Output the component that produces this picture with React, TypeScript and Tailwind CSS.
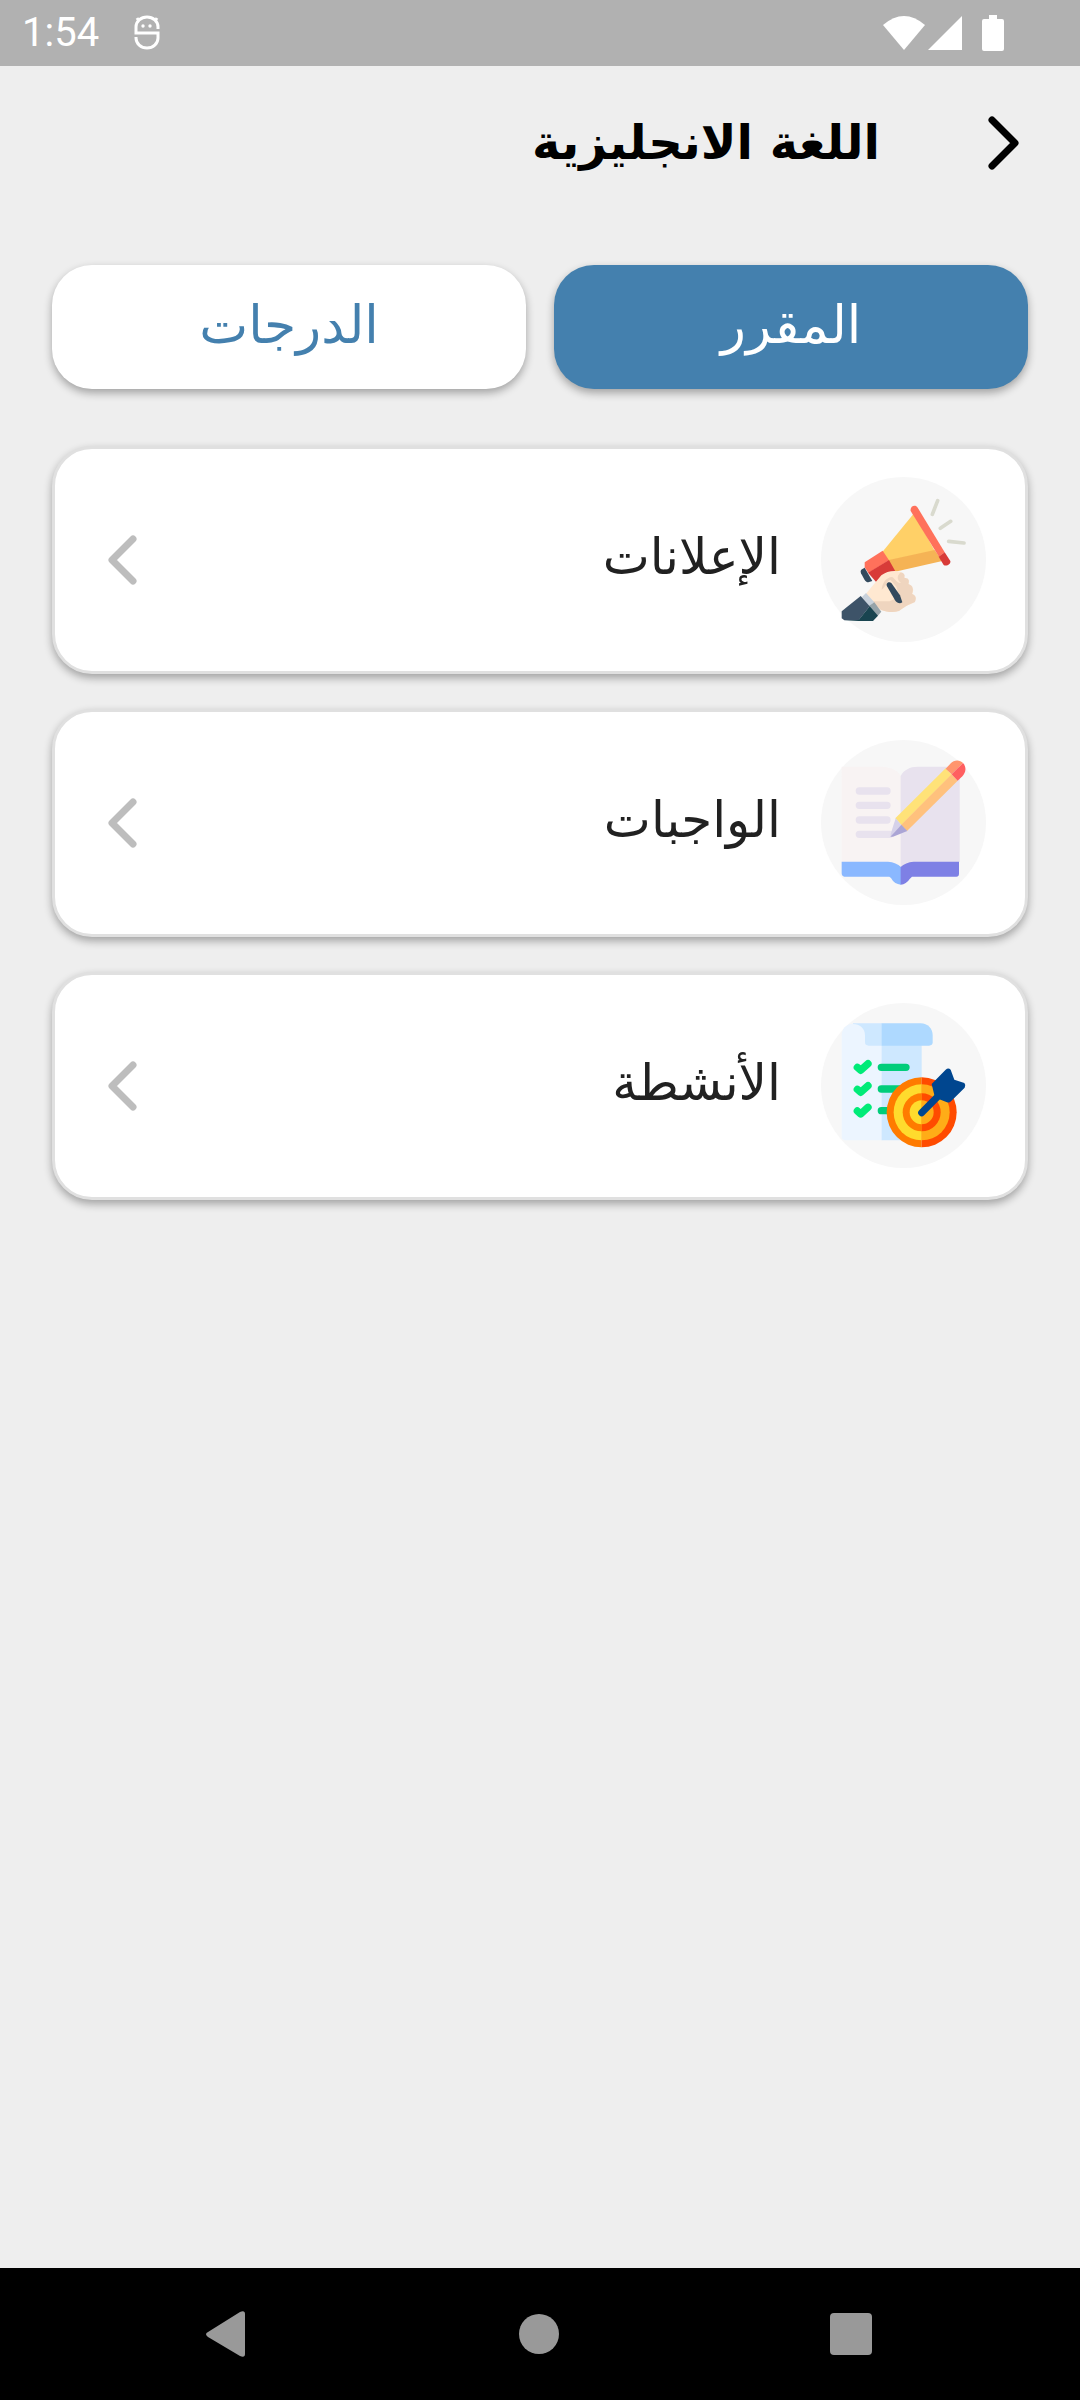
import { useState, type ReactNode } from "react";

function MegaphoneIcon() {
  return (
    <svg viewBox="64 111 495 495" className="size-[165px] shrink-0" aria-hidden="true">
      <circle cx="311.500" cy="358.500" r="247.500" fill="#f7f7f7" />
      <path d="M343 220L248 336L266 362L405 332Z" fill="#ffd067" />
      <path d="M264 361L405 330L428 363L286 395Z" fill="#f5b355" />
      <path d="M333 213C330 199 347 192 354 203L435 337L418 350Z" fill="#ff715b" />
      <path d="M435 337L452 363C455 371 440 381 432 375L417 350Z" fill="#d83b38" />
      <path d="M249 332L268 361L206 399L195 382V367Z" fill="#ff715b" />
      <path d="M268 360L287 394L230 427L205 398Z" fill="#d83b38" />
      <path d="M195 383L218 423L206 427C202 427 198 424 195 420L184 400C181 393 184 390 187 388Z" fill="#334a5e" />
      <path d="M199 461L245 406C262 392 286 390 304 396L316 414L327 420V431L341 449L338 462L348 470C350 486 338 490 324 496L300 511C285 519 265 516 244 510Z" fill="#ffe8d1" />
      <path d="M212 484H270L300 470L290 440L273 420C261 420 262 438 246 449C248 428 260 412 277 411C286 415 292 431 304 429C294 422 291 411 298 403C302 394 312 396 315 406L314 414C327 412 330 422 326 432C341 436 342 449 337 462C349 464 351 478 345 487C326 493 309 505 298 513C281 519 260 516 244 510L218 487Z" fill="#efd5bf" />
      <path d="M262 439C257 429 268 423 275 429L301 466L308 487C300 493 292 488 287 482Z" fill="#334a5e" />
      <path d="M199 459L224 487L208 498L187 471Z" fill="#c8d1db" />
      <path d="M224 487L245 515L234 528L206 499Z" fill="#96a3a9" />
      <path d="M183 468L210 499L177 541H134L126 535V514Z" fill="#3d5368" />
      <path d="M210 499L235 527L220 543H134L177 540Z" fill="#194450" />
      <path d="M414 182L398 223M453 244L422 265M447 304L493 309" fill="none" stroke="#d9dace" strokeWidth="11" strokeLinecap="round" />
    </svg>
  );
}

function NotebookIcon() {
  return (
    <svg viewBox="64 121 495 495" className="size-[165px] shrink-0" aria-hidden="true">
      <circle cx="311.500" cy="368.500" r="247.500" fill="#f7f7f7" />
      <path d="M126 201H246C275 202 297 214 304 230V503L266 487H126Z" fill="#f8f3f3" />
      <path d="M303 229C312 211 331 201 354 201H470Q480 201 480 211V487H342L303 503Z" fill="#e8e2ee" />
      <path d="M179 274H262M179 317H262M179 361H262M179 404H270" stroke="#e8e2ee" strokeWidth="22" strokeLinecap="round" />
      <path d="M126 486H265Q290 488 304 502V555Q284 554 274 535L269 531H134Q126 530 126 521Z" fill="#8ab8ff" />
      <path d="M303 502Q317 488 342 486H478V522Q478 531 470 531H337L330 538Q320 554 303 555Z" fill="#7e80e5" />
      <path d="M438 206L456 225L305 376L287 356Z" fill="#ffe278" />
      <path d="M456 224L474 243L322 394L304 376Z" fill="#ffc17d" />
      <path d="M438 207L452 192C464 179 481 180 490 190L456 224Z" fill="#ff956d" />
      <path d="M490 190C501 202 499 218 488 230L474 243L456 224Z" fill="#ff5f60" />
      <path d="M288 356L305 376L273 410V403Z" fill="#d5d1e9" />
      <path d="M305 375L323 394L280 411H272Z" fill="#aba5d5" />
    </svg>
  );
}

function ChecklistTargetIcon() {
  return (
    <svg viewBox="64 131 495 495" className="size-[165px] shrink-0" aria-hidden="true">
      <circle cx="311.500" cy="378.500" r="247.500" fill="#f7f7f7" />
      <path d="M160 193H248V543H135Q126 541 126 533V228C126 209 139 194 160 193Z" fill="#ecf5ff" />
      <path d="M246 250H366V543H246Z" fill="#cee8ff" />
      <path d="M160 192H247V259H207Q196 259 196 249V228C196 207 180 194 160 194Z" fill="#cee8ff" />
      <path d="M246 192H363C384 192 399 207 399 228V249Q399 259 388 259H246Z" fill="#aed9ff" />
      <g fill="none" stroke="#00eb78" strokeWidth="22" strokeLinecap="round" strokeLinejoin="round">
        <path d="M173 324L183 333L205 313" />
        <path d="M173 390L183 399L205 379" />
        <path d="M173 455L183 464L205 444" />
      </g>
      <path d="M245 324H319M245 389H320M245 454H300" stroke="#00cd7b" strokeWidth="22" strokeLinecap="round" />
      <path d="M366 354A105 105 0 0 0 366 564Z" fill="#ff7b00" />
      <path d="M366 354A105 105 0 0 1 366 564Z" fill="#ff4b00" />
      <path d="M366 375A84 84 0 0 0 366 543Z" fill="#ffdb2d" />
      <path d="M366 375A84 84 0 0 1 366 543Z" fill="#ffac17" />
      <path d="M366 402A57 57 0 0 0 366 516Z" fill="#ff7b00" />
      <path d="M366 402A57 57 0 0 1 366 516Z" fill="#ff4b00" />
      <path d="M366 423A36 36 0 0 0 366 495Z" fill="#ffdb2d" />
      <path d="M366 423A36 36 0 0 1 366 495Z" fill="#ffac17" />
      <path d="M366 460L418 408" stroke="#00468f" strokeWidth="21" strokeLinecap="round" />
      <path d="M404 407L396 374L438 331Q446 324 453 331L464 361L494 371Q500 378 495 385L454 426Q449 431 442 429L419 420Z" fill="#00468f" />
    </svg>
  );
}

const lessons: { label: string; icon: ReactNode }[] = [
  { label: "الإعلانات", icon: <MegaphoneIcon /> },
  { label: "الواجبات", icon: <NotebookIcon /> },
  { label: "الأنشطة", icon: <ChecklistTargetIcon /> },
];

function StatusBar() {
  return (
    <div dir="ltr" className="flex h-[66px] items-center bg-[#b1b1b1] pr-[76px] pl-[22px] text-white">
      <span className="w-[76px] font-[Roboto,sans-serif] text-[40px] leading-[44px] whitespace-nowrap">1:54</span>
      <svg viewBox="0 0 26 36" className="ml-9 h-9 w-[26px]" fill="none" stroke="currentColor" aria-hidden="true">
        <path d="M24 14V12A11 10 0 0 0 2 12V18H24V23A11 10 0 0 1 2 23V22M5 6L3 3M21 6L23 3" strokeWidth="3" />
        <circle cx="9" cy="11" r="1.700" fill="currentColor" stroke="none" />
        <circle cx="16" cy="11" r="1.700" fill="currentColor" stroke="none" />
      </svg>
      <div className="ml-auto flex items-center">
        <svg viewBox="0 0 42 36" className="h-9 w-[42px]" fill="currentColor" aria-hidden="true">
          <path d="M0 10Q21 -8 42 10L21 35Z" />
        </svg>
        <svg viewBox="0 0 35 36" className="ml-0.5 h-9 w-[35px]" fill="currentColor" aria-hidden="true">
          <path d="M35 1V35H1Z" />
        </svg>
        <svg viewBox="0 0 22 36" className="ml-5 h-9 w-[22px]" fill="currentColor" aria-hidden="true">
          <path d="M7 0H15V4H20Q22 4 22 6V34Q22 36 20 36H2Q0 36 0 34V6Q0 4 2 4H7Z" />
        </svg>
      </div>
    </div>
  );
}

const tabShape = "h-[124px] flex-1 rounded-[40px] pb-1 text-[52px] leading-[64px] shadow-[0_4px_8px_rgba(0,0,0,0.32)]";

export default function App() {
  const [tab, setTab] = useState<"course" | "grades">("course");

  return (
    <div dir="rtl" className="flex min-h-screen flex-col bg-[#eeeeee] font-['DejaVu_Sans',sans-serif]">
      <StatusBar />
      <header className="flex h-[156px] items-center px-[52px]">
        <button type="button" aria-label="رجوع" className="flex w-12 justify-start">
          <svg viewBox="0 0 48 60" className="h-[60px] w-12" fill="none" stroke="#000" strokeWidth="7" strokeLinecap="round" strokeLinejoin="round" aria-hidden="true">
            <path d="M12 6L35 29L12 52" />
          </svg>
        </button>
        <h1 className="ms-[100px] pb-1 text-[48px] leading-[60px] font-bold text-black">اللغة الانجليزية</h1>
      </header>

      <main className="flex flex-1 flex-col px-[52px] pt-[43px]">
        <div role="tablist" className="flex gap-7">
          <button
            type="button"
            role="tab"
            aria-selected={tab === "course"}
            onClick={() => setTab("course")}
            className={`${tabShape} ${tab === "course" ? "bg-[#4480ae] text-white" : "bg-white text-[#4480ae]"}`}
          >
            المقرر
          </button>
          <button
            type="button"
            role="tab"
            aria-selected={tab === "grades"}
            onClick={() => setTab("grades")}
            className={`${tabShape} ${tab === "grades" ? "bg-[#4480ae] text-white" : "bg-white text-[#4480ae]"}`}
          >
            الدرجات
          </button>
        </div>

        <ul className="mt-[57px] flex flex-col gap-[35px]">
          {lessons.map(({ label, icon }) => (
            <li key={label}>
              <button
                type="button"
                className="flex h-[228px] w-full items-center rounded-[40px] border-3 border-[#e0e0e0] bg-white ps-[39px] pe-[51px] pb-[2px] shadow-[0_4px_8px_rgba(0,0,0,0.32)]"
              >
                {icon}
                <span className="ms-10 pb-1 text-[50px] leading-[60px] text-[#212121]">{label}</span>
                <svg viewBox="0 0 34 52" className="ms-auto h-[52px] w-[34px]" fill="none" stroke="#bdbdbd" strokeWidth="7" strokeLinecap="round" strokeLinejoin="round" aria-hidden="true">
                  <path d="M27 6L6 27L27 48" />
                </svg>
              </button>
            </li>
          ))}
        </ul>
      </main>

      <nav dir="ltr" className="flex h-[132px] items-center justify-between bg-black pr-[204px] pl-[200px] text-[#999999]">
        <button type="button" aria-label="Back" className="p-1">
          <svg viewBox="0 0 44 48" className="h-12 w-11" fill="currentColor" aria-hidden="true">
            <path d="M4 22L36 2Q41 0 41 4V44Q41 48 36 46L4 27Q0 24 4 22Z" />
          </svg>
        </button>
        <button type="button" aria-label="Home" className="p-1">
          <span className="block size-10 rounded-full bg-[#999999]" />
        </button>
        <button type="button" aria-label="Recents" className="p-1">
          <span className="block size-[42px] rounded-[4px] bg-[#999999]" />
        </button>
      </nav>
    </div>
  );
}
